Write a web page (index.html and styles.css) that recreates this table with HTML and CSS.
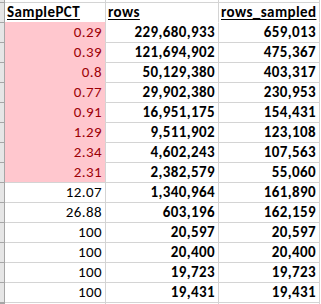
FILE: index.html
```html
<!DOCTYPE html>
<html>
<head>
<meta charset="utf-8">
<link rel="stylesheet" href="styles.css">
</head>
<body>
<div class="sheet">
  <div class="rh"></div><div class="c top"></div><div class="c top"></div><div class="c top"></div>

  <div class="rh"></div><div class="c hd hd-a"><span class="u">SamplePCT</span></div><div class="c hd"><span class="u">rows</span></div><div class="c hd"><span class="u">rows_sampled</span></div>

  <div class="rh"></div><div class="c n bad">0.29</div><div class="c n b">229,680,933</div><div class="c n b">659,013</div>
  <div class="rh"></div><div class="c n bad">0.39</div><div class="c n b">121,694,902</div><div class="c n b">475,367</div>
  <div class="rh"></div><div class="c n bad">0.8</div><div class="c n b">50,129,380</div><div class="c n b">403,317</div>
  <div class="rh"></div><div class="c n bad">0.77</div><div class="c n b">29,902,380</div><div class="c n b">230,953</div>
  <div class="rh"></div><div class="c n bad">0.91</div><div class="c n b">16,951,175</div><div class="c n b">154,431</div>
  <div class="rh"></div><div class="c n bad">1.29</div><div class="c n b">9,511,902</div><div class="c n b">123,108</div>
  <div class="rh"></div><div class="c n bad">2.34</div><div class="c n b">4,602,243</div><div class="c n b">107,563</div>
  <div class="rh"></div><div class="c n bad last">2.31</div><div class="c n b">2,382,579</div><div class="c n b">55,060</div>
  <div class="rh"></div><div class="c n">12.07</div><div class="c n b">1,340,964</div><div class="c n b">161,890</div>
  <div class="rh"></div><div class="c n">26.88</div><div class="c n b">603,196</div><div class="c n b">162,159</div>
  <div class="rh"></div><div class="c n">100</div><div class="c n b">20,597</div><div class="c n b">20,597</div>
  <div class="rh"></div><div class="c n">100</div><div class="c n b">20,400</div><div class="c n b">20,400</div>
  <div class="rh"></div><div class="c n">100</div><div class="c n b">19,723</div><div class="c n b">19,723</div>
  <div class="rh"></div><div class="c n">100</div><div class="c n b">19,431</div><div class="c n b">19,431</div>

  <div class="rh"></div><div class="c"></div><div class="c"></div><div class="c"></div>
</div>
</body>
</html>
```

FILE: styles.css
```css
html, body {
  margin: 0;
  padding: 0;
  background: #ffffff;
}

.sheet {
  display: grid;
  grid-template-columns: 5px 101px 113px 101px;
  grid-template-rows: 3px repeat(15, 20px) 1px;
  font-family: "Carlito", "Liberation Sans", sans-serif;
  font-size: 15px;
  letter-spacing: 0.4px;
  color: #000000;
}

.rh {
  box-sizing: border-box;
  background: #e6e6e6;
  border-right: 1px solid #a6a6a6;
  border-bottom: 1px solid #a6a6a6;
}

.c {
  box-sizing: border-box;
  border-right: 1px solid #d4d4d4;
  border-bottom: 1px solid #d4d4d4;
  display: flex;
  align-items: flex-end;
  padding: 0 3px 1px 2px;
  line-height: 17px;
  white-space: nowrap;
  overflow: hidden;
}

.hd {
  font-weight: bold;
  border-bottom-color: #ffffff;
}

.hd-a {
  border-bottom-color: #ffc7ce;
}

.u {
  text-decoration: underline;
  text-decoration-thickness: 1px;
  text-underline-offset: 2px;
}

.n {
  justify-content: flex-end;
}

.b {
  font-weight: bold;
}

.bad {
  background: #ffc7ce;
  color: #9c0006;
  border-bottom-color: #ffc7ce;
}

.bad.last {
  border-bottom-color: #d4d4d4;
}
```
